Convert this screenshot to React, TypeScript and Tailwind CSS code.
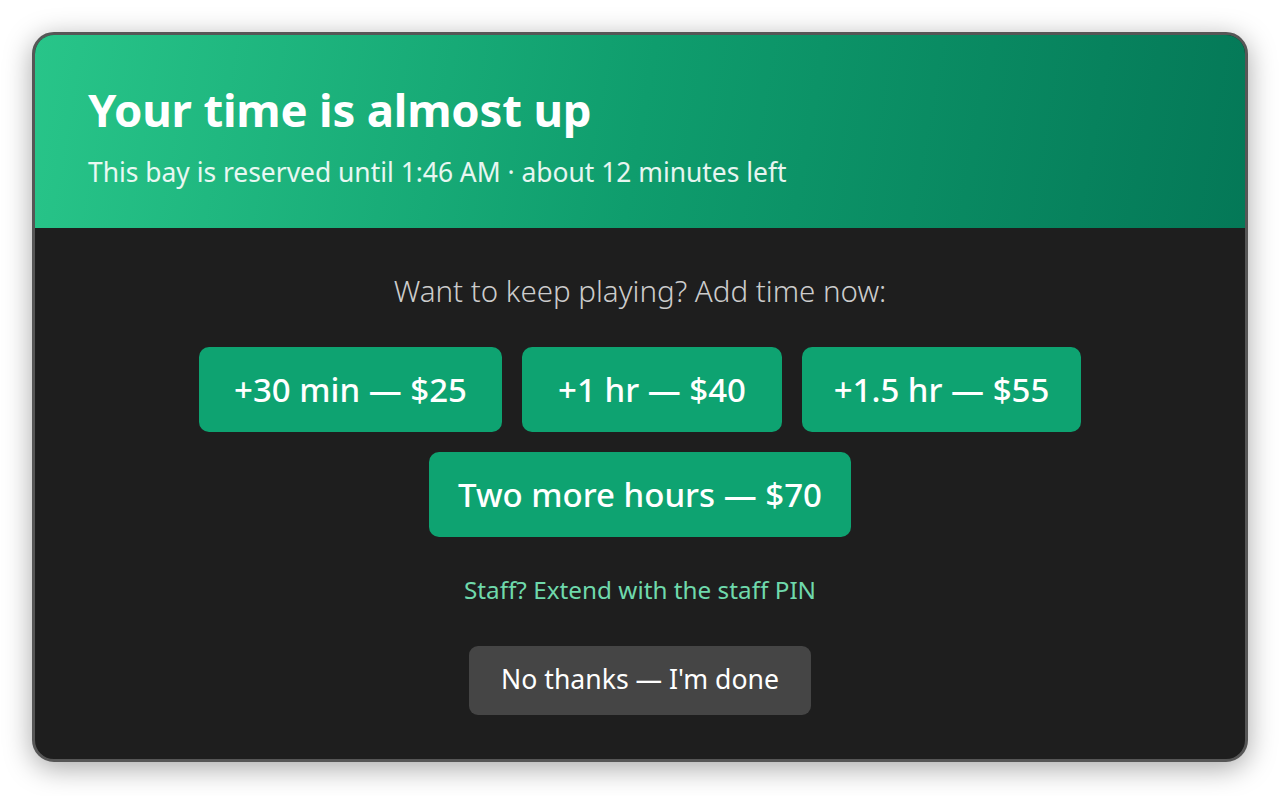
import React from 'react';

const font = { fontFamily: '"Segoe UI", "Noto Sans", "Open Sans", sans-serif' };

const options = [
  { label: '+30 min — $25', w: 'w-[303px]' },
  { label: '+1 hr — $40', w: 'w-[260px]' },
  { label: '+1.5 hr — $55', w: 'w-[279px]' },
];

export default function App() {
  return (
    <div className="w-[1280px] h-[796px] bg-white pt-[32px] px-[32px]" style={font}>
      <div className="w-[1216px] h-[730px] rounded-[22px] border-[3px] border-[#565656] bg-[#1e1e1e] overflow-hidden shadow-[0_6px_28px_rgba(0,0,0,0.35)] flex flex-col">
        <div className="h-[193px] shrink-0 bg-[linear-gradient(100deg,#28c589_0%,#0f9d6d_50%,#047857_100%)] px-[53px] flex flex-col justify-center pt-[10px]">
          <h1 className="text-[45.5px] leading-[1.15] font-bold text-white tracking-[-0.2px]">Your time is almost up</h1>
          <p className="text-[26.4px] leading-[1.3] text-white/90 mt-[20px]">
            This bay is reserved until 1:46 AM · about 12 minutes left
          </p>
        </div>

        <div className="flex-1 flex flex-col items-center pt-[44px]">
          <p className="text-[29.5px] leading-[1.3] text-[#cccccc] font-light">Want to keep playing? Add time now:</p>

          <div className="flex gap-[20px] mt-[37px]">
            {options.map((o) => (
              <button
                key={o.label}
                className={`${o.w} h-[85px] rounded-[10px] bg-[#0ea371] text-white text-[33px] font-medium`}
              >
                {o.label}
              </button>
            ))}
          </div>
          <button className="w-[422px] h-[85px] mt-[20px] rounded-[10px] bg-[#0ea371] text-white text-[33px] font-medium">
            Two more hours — $70
          </button>

          <p className="mt-[37px] text-[24.3px] leading-[1.3] text-[#6fd9ac]">Staff? Extend with the staff PIN</p>

          <button className="mt-[40px] w-[342px] h-[69px] rounded-[9px] bg-[#454545] text-white text-[26.6px]">
            No thanks — I'm done
          </button>
        </div>
      </div>
    </div>
  );
}
